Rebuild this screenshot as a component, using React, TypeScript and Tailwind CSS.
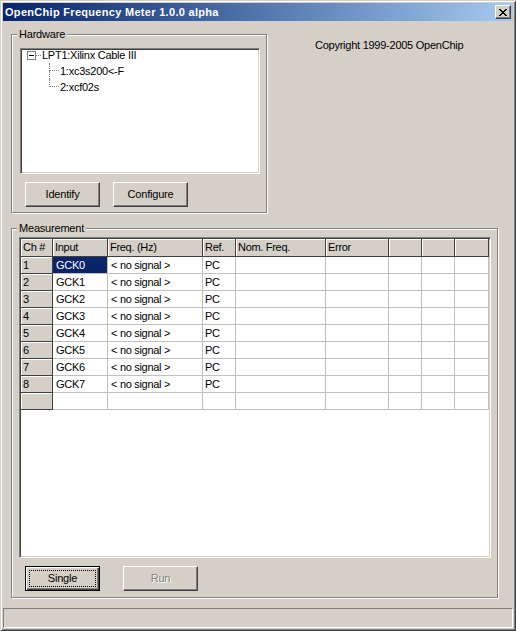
import React from "react";

const FONT = "font-['Liberation_Sans',Arial,sans-serif]";

const cols = [32, 55, 95, 33, 90, 63, 33, 33, 34];
const headers = ["Ch #", "Input", "Freq. (Hz)", "Ref.", "Nom. Freq.", "Error", "", "", ""];
const rows = Array.from({ length: 8 }, (_, i) => ({
  ch: String(i + 1),
  input: `GCK${i}`,
  freq: "< no signal >",
  ref: "PC",
}));

function Btn({ label, w = 75, variant = "normal" }: { label: string; w?: number; variant?: "normal" | "default" | "disabled" }) {
  if (variant === "default") {
    return (
      <div
        className="h-[25px] bg-[#d4d0c8] border border-black shadow-[inset_1px_1px_0_#fff,inset_-1px_-1px_0_#404040,inset_-2px_-2px_0_#808080] p-[3px] flex"
        style={{ width: w }}
      >
        <div className="flex-1 border border-dotted border-black flex items-center justify-center text-[11px] tracking-[-0.2px] text-black">
          {label}
        </div>
      </div>
    );
  }
  return (
    <div
      className={`h-[25px] bg-[#d4d0c8] border border-t-white border-l-white border-r-[#404040] border-b-[#404040] shadow-[inset_-1px_-1px_0_#808080] flex items-center justify-center text-[11px] tracking-[-0.2px] ${
        variant === "disabled" ? "text-[#808080] [text-shadow:1px_1px_0_#fff]" : "text-black"
      }`}
      style={{ width: w }}
    >
      {label}
    </div>
  );
}

function Connector({ last }: { last: boolean }) {
  return (
    <div className="w-[10px] h-[16px] flex flex-col">
      <div className="h-[8px] border-l border-b border-dotted border-[#808080]" />
      <div className={`h-[8px] ${last ? "" : "border-l border-dotted border-[#808080]"}`} />
    </div>
  );
}

export default function App() {
  return (
    <div
      className={`${FONT} w-[516px] h-[631px] bg-[#d4d0c8] p-[3px] flex flex-col shadow-[inset_1px_1px_0_#d4d0c8,inset_-1px_-1px_0_#404040,inset_2px_2px_0_#fff,inset_-2px_-2px_0_#808080] text-[11px] text-black overflow-hidden`}
    >
      {/* Title bar */}
      <div className="h-[18px] shrink-0 bg-gradient-to-r from-[#0a246a] to-[#a6caf0] flex items-center pl-[2px] pr-[2px]">
        <span className="text-white font-bold text-[11px] tracking-[0.3px] leading-[18px] whitespace-nowrap">
          OpenChip Frequency Meter 1.0.0 alpha
        </span>
        <div className="ml-auto w-[16px] h-[14px] bg-[#d4d0c8] border border-t-white border-l-white border-r-[#404040] border-b-[#404040] shadow-[inset_-1px_-1px_0_#808080] flex items-center justify-center">
          <svg width="8" height="7" viewBox="0 0 8 7" shapeRendering="crispEdges">
            <path d="M0 0h2v1H0zM6 0h2v1H6zM1 1h2v1H1zM5 1h2v1H5zM2 2h4v1H2zM3 3h2v1H3zM2 4h4v1H2zM1 5h2v1H1zM5 5h2v1H5zM0 6h2v1H0zM6 6h2v1H6z" fill="#000" />
          </svg>
        </div>
      </div>

      {/* Client */}
      <div className="flex-1 flex flex-col pl-[8px]">
        <div className="flex items-start">
          {/* Hardware group */}
          <div className="relative mt-[13px] w-[256px] h-[179px] border border-[#808080] shadow-[inset_1px_1px_0_#fff,1px_1px_0_#fff] pt-[13px] pl-[8px] flex flex-col">
            <span className="absolute left-[5px] top-[-7px] px-[2px] bg-[#d4d0c8] leading-[13px] tracking-[-0.2px]">
              Hardware
            </span>
            <div className="w-[240px] h-[126px] bg-white border border-t-[#808080] border-l-[#808080] border-r-white border-b-white shadow-[inset_1px_1px_0_#404040,inset_-1px_-1px_0_#d4d0c8] p-px overflow-hidden">
              <div className="mt-[-3px] tracking-[-0.25px]">
                <div className="h-[16px] flex items-center pl-[5px]">
                  <div className="w-[9px] h-[9px] border border-[#808080] bg-white flex items-center justify-center">
                    <div className="w-[5px] h-px bg-black" />
                  </div>
                  <div className="w-[5px] border-t border-dotted border-[#808080]" />
                  <span className="ml-[1px] leading-[16px] whitespace-nowrap">LPT1:Xilinx Cable III</span>
                </div>
                {["1:xc3s200<-F", "2:xcf02s"].map((t, i) => (
                  <div key={t} className="h-[16px] flex items-center pl-[27px]">
                    <Connector last={i === 1} />
                    <span className="ml-[1px] leading-[16px] whitespace-nowrap">{t}</span>
                  </div>
                ))}
              </div>
            </div>
            <div className="flex mt-[8px] ml-[5px] gap-[13px]">
              <Btn label="Identify" />
              <Btn label="Configure" />
            </div>
          </div>

          <div className="ml-[48px] mt-[18px] leading-[13px] tracking-[-0.25px] whitespace-nowrap">
            Copyright 1999-2005 OpenChip
          </div>
        </div>

        {/* Measurement group */}
        <div className="relative mt-[15px] w-[487px] h-[370px] border border-[#808080] shadow-[inset_1px_1px_0_#fff,1px_1px_0_#fff] pt-[8px] pl-[7px] flex flex-col">
          <span className="absolute left-[5px] top-[-7px] px-[2px] bg-[#d4d0c8] leading-[13px] tracking-[-0.2px]">
            Measurement
          </span>
          <div className="w-[472px] h-[321px] bg-white border border-t-[#808080] border-l-[#808080] border-r-white border-b-white shadow-[inset_1px_1px_0_#404040,inset_-1px_-1px_0_#d4d0c8] p-px overflow-hidden">
            <div className="grid grid-cols-[32px_55px_95px_33px_90px_63px_33px_33px_34px] grid-rows-[18px_repeat(9,17px)] tracking-[-0.3px]">
              {headers.map((h, i) => (
                <div
                  key={"h" + i}
                  className="bg-[#d4d0c8] border-r border-b border-[#404040] shadow-[inset_1px_1px_0_#fff] flex items-center pl-[2px] whitespace-nowrap overflow-hidden"
                >
                  {h}
                </div>
              ))}
              {rows.map((r, ri) => (
                <React.Fragment key={r.ch}>
                  <div className="bg-[#d4d0c8] border-r border-b border-[#404040] shadow-[inset_1px_1px_0_#fff] flex items-center pl-[2px]">
                    {r.ch}
                  </div>
                  <div
                    className={`border-r border-b border-[#c0c0c0] flex items-center pl-[3px] ${
                      ri === 0 ? "bg-[#0a246a] text-white" : "bg-white"
                    }`}
                  >
                    {r.input}
                  </div>
                  <div className="border-r border-b border-[#c0c0c0] flex items-center pl-[3px] whitespace-nowrap">{r.freq}</div>
                  <div className="border-r border-b border-[#c0c0c0] flex items-center pl-[2px]">{r.ref}</div>
                  {cols.slice(4).map((_, ci) => (
                    <div key={ci} className="border-r border-b border-[#c0c0c0]" />
                  ))}
                </React.Fragment>
              ))}
              <div className="bg-[#d4d0c8] border-r border-b border-[#404040] shadow-[inset_1px_1px_0_#fff]" />
              {cols.slice(1).map((_, ci) => (
                <div key={"e" + ci} className="border-r border-b border-[#c0c0c0]" />
              ))}
            </div>
          </div>
          <div className="flex mt-[8px] ml-[6px] gap-[23px]">
            <Btn label="Single" variant="default" />
            <Btn label="Run" variant="disabled" />
          </div>
        </div>

        <div className="mt-[10px] ml-[-8px] h-[20px] w-[510px] border border-t-[#808080] border-l-[#808080] border-r-white border-b-white" />
      </div>
    </div>
  );
}
